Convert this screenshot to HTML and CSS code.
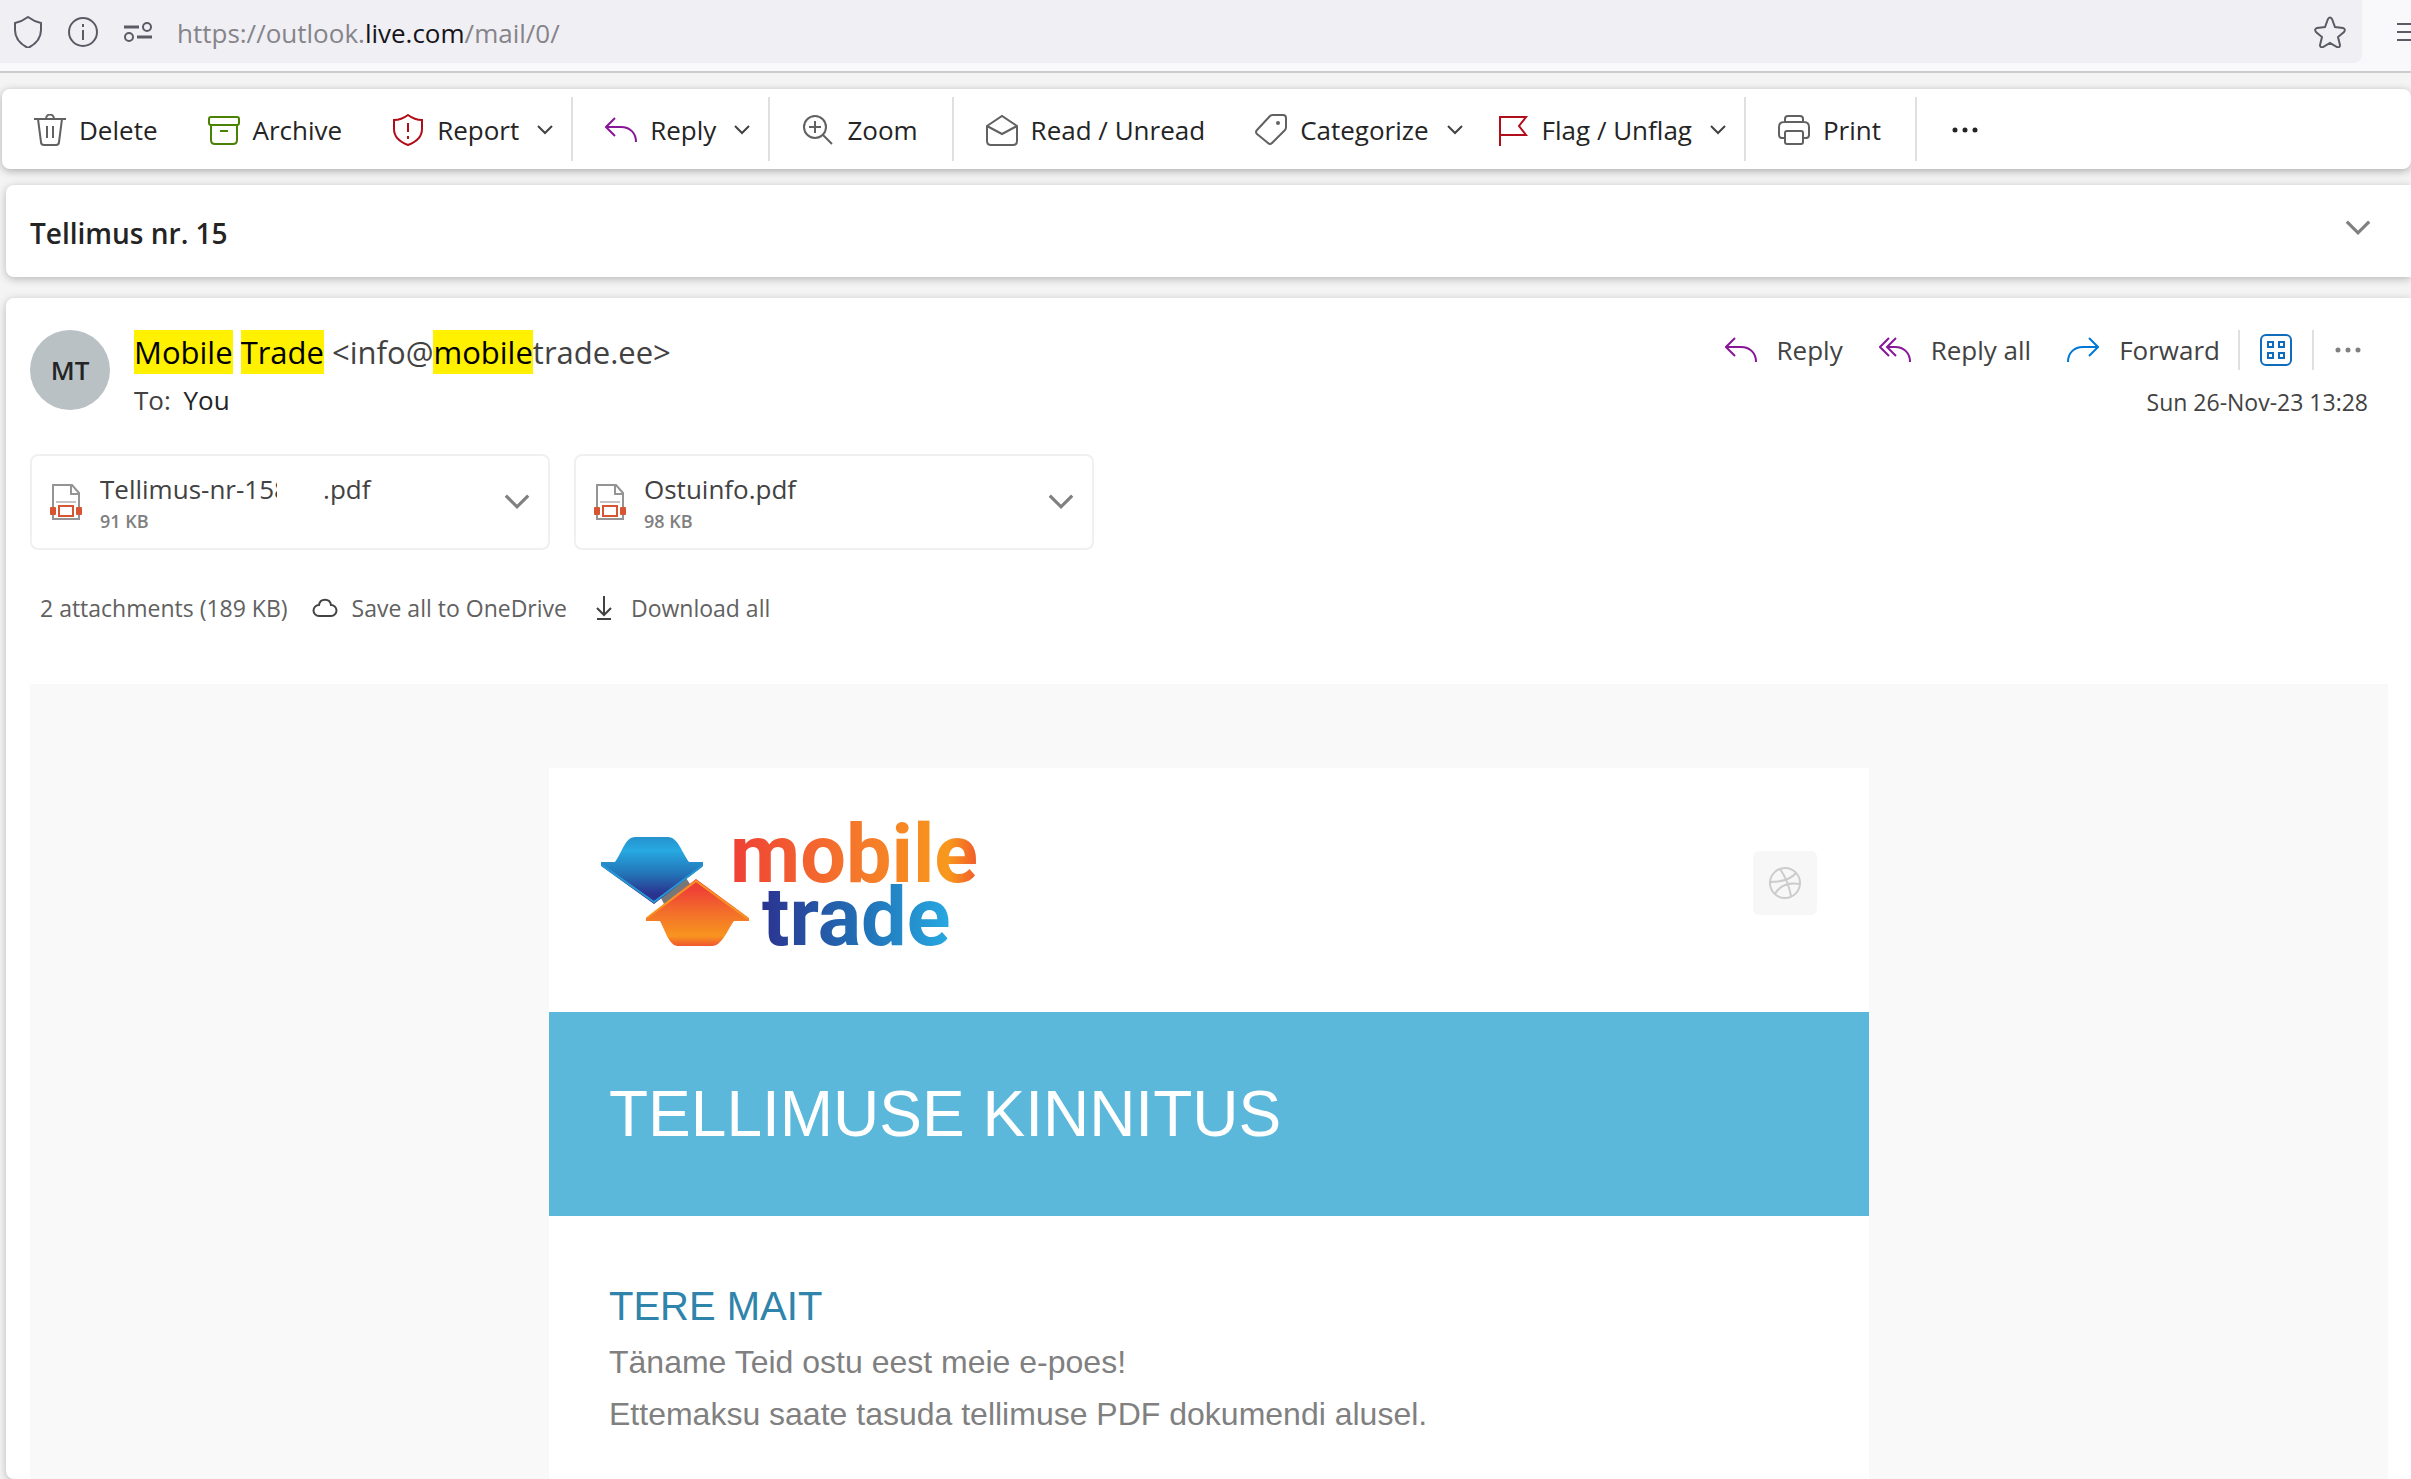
FILE: index.html
```html
<!DOCTYPE html>
<html lang="en">
<head>
  <meta charset="UTF-8" />
  <meta name="viewport" content="width=device-width, initial-scale=1.0"/>
  <title>Tellimus nr. 15 - Outlook</title>
  <link rel="stylesheet" href="styles.css">
</head>
<body>
  <!-- Shared icons -->
  <svg class="sprite" aria-hidden="true">
    <symbol id="chevron" viewBox="0 0 16 10"><path d="M1 1l7 7 7-7"/></symbol>
    <symbol id="dots" viewBox="0 0 32 32"><path d="M6 16h0M16 16h0M26 16h0" stroke-width="5" stroke-linecap="round"/></symbol>
    <symbol id="reply" viewBox="0 0 32 32"><path d="M10 4L1 13l9 9M1 13h15c9 0 15 6 15 15"/></symbol>
    <symbol id="reply-all" viewBox="0 0 32 32"><path d="M10 4L1 13l9 9M17 4l-9 9 9 9M8 13h8c9 0 15 6 15 15"/></symbol>
    <symbol id="forward" viewBox="0 0 32 32"><path d="M22 4l9 9-9 9M31 13H16C7 13 1 19 1 28"/></symbol>
    <symbol id="pdf" viewBox="0 0 32 38">
      <path d="M3 2h19l7 8v26H3zM21 2v9h8" fill="#fff" stroke="#949494"/>
      <path d="M6 19h20" stroke="#c4c4c4"/>
      <path d="M3 22h26v12H3z" fill="#fff" stroke="none"/>
      <path d="M3 22v12M29 22v12" stroke="#949494"/>
      <rect x="0" y="24" width="6" height="8" rx="1" fill="#d65532" stroke="none"/>
      <rect x="26" y="24" width="6" height="8" rx="1" fill="#d65532" stroke="none"/>
      <rect x="9" y="23" width="14" height="10" fill="#fff" stroke="#d65532"/>
    </symbol>
  </svg>

  <div class="browser-bar">
    <div class="url-box">
      <svg class="icon" viewBox="0 0 32 32"><path d="M16 1c4 3 8 5 13 6v7c0 8-5 14-13 18C8 28 3 22 3 14V7c5-1 9-3 13-6z"/></svg>
      <svg class="icon" viewBox="0 0 32 32"><circle cx="16" cy="16" r="14"/><path d="M16 14v10M16 8v3"/></svg>
      <svg class="icon" viewBox="0 0 32 32"><path d="M2 11h15M15 21h15" stroke-width="3"/><circle cx="25" cy="11" r="4"/><circle cx="7" cy="21" r="4"/></svg>
      <div class="url">https://outlook.<span>live.com</span>/mail/0/</div>
      <button class="plain" aria-label="Bookmark this page">
        <svg class="icon" viewBox="0 0 32 32"><path d="M14 3q2-3 4 0l3 8 8 1q3 1 1 4l-6 5 2 8q0 3-3 2l-7-4-7 4q-3 1-3-2l2-8-6-5q-2-3 1-4l8-1z"/></svg>
      </button>
    </div>
    <button class="plain menu" aria-label="Menu"><svg viewBox="0 0 15 20"><path d="M1 2h16M1 10h16M1 18h16"/></svg></button>
  </div>

  <div class="toolbar">
    <div class="group">
      <button class="tool">
        <svg class="icon" viewBox="0 0 32 32"><path d="M0 5h32M12 5c0-6 8-6 8 0M4 5l3 23q0 3 3 3h12q3 0 3-3l3-23M13 12v12M19 12v12"/></svg>Delete
      </button>
      <button class="tool">
        <svg class="icon green" viewBox="0 0 32 32"><rect x="1" y="3" width="30" height="8" rx="2"/><path d="M3 11v15q0 4 4 4h18q4 0 4-4V11M12 17h8"/></svg>Archive
      </button>
      <button class="tool">
        <svg class="icon red" viewBox="0 0 32 32"><path d="M16 1c4 3 8 5 14 5v9c0 8-6 13-14 16C8 28 2 23 2 15V6c6 0 10-2 14-5zM16 9v9M16 22v3"/></svg>Report
        <svg class="chev"><use href="#chevron"/></svg>
      </button>
    </div>
    <div class="group">
      <button class="tool">
        <svg class="icon purple"><use href="#reply"/></svg>Reply
        <svg class="chev"><use href="#chevron"/></svg>
      </button>
    </div>
    <div class="group">
      <button class="tool">
        <svg class="icon" viewBox="0 0 32 32"><circle cx="13" cy="13" r="11"/><path d="M21 21l9 9M7 13h12M13 7v12"/></svg>Zoom
      </button>
    </div>
    <div class="group">
      <button class="tool">
        <svg class="icon" viewBox="0 0 32 32"><path d="M1 12L16 2l15 10v15q0 4-4 4H5q-4 0-4-4zM1 12l15 8 15-8"/></svg>Read / Unread
      </button>
      <button class="tool">
        <svg class="icon" viewBox="0 0 32 32"><path d="M18 1h10q3 0 3 3v9q0 2-1 3L17 29q-2 2-4 0L2 20q-2-2 0-4L15 2q1-1 3-1z"/><circle cx="23" cy="9" r="1"/></svg>Categorize
        <svg class="chev"><use href="#chevron"/></svg>
      </button>
      <button class="tool">
        <svg class="icon red" viewBox="0 0 32 32"><path d="M3 32V3h26l-7 9 7 9H3"/></svg>Flag / Unflag
        <svg class="chev"><use href="#chevron"/></svg>
      </button>
    </div>
    <div class="group">
      <button class="tool">
        <svg class="icon" viewBox="0 0 32 32"><path d="M7 24H4q-3 0-3-3v-8q0-5 5-5h20q5 0 5 5v8q0 3-3 3h-3M7 8V5q0-3 3-3h12q3 0 3 3v3"/><rect x="7" y="17" width="18" height="13" rx="2"/></svg>Print
      </button>
    </div>
    <div class="group">
      <button class="tool" aria-label="More options"><svg class="icon dots"><use href="#dots"/></svg></button>
    </div>
  </div>

  <div class="card subject">
    <h2>Tellimus nr. 15</h2>
    <button class="plain" aria-label="Expand"><svg class="chev big"><use href="#chevron"/></svg></button>
  </div>

  <div class="card message">
    <div class="header">
      <div class="avatar">MT</div>
      <div class="people">
        <div class="from"><mark>Mobile</mark> <mark>Trade</mark> &lt;info@<mark>mobile</mark>trade.ee&gt;</div>
        <div class="to">To: <span>You</span></div>
      </div>
      <div class="side">
        <div class="actions">
          <button class="action"><svg class="icon purple"><use href="#reply"/></svg>Reply</button>
          <button class="action"><svg class="icon purple"><use href="#reply-all"/></svg>Reply all</button>
          <button class="action"><svg class="icon blue"><use href="#forward"/></svg>Forward</button>
          <button class="action apps" aria-label="Apps">
            <svg class="icon" viewBox="0 0 32 32"><rect x="1" y="1" width="30" height="30" rx="5"/><path d="M8 8h5v5H8zM19 8h5v5h-5zM8 19h5v5H8zM19 19h5v5h-5z"/></svg>
          </button>
          <button class="action" aria-label="More actions"><svg class="icon dots"><use href="#dots"/></svg></button>
        </div>
        <div class="date">Sun 26-Nov-23 13:28</div>
      </div>
    </div>

    <div class="files">
      <div class="file">
        <svg class="pdf"><use href="#pdf"/></svg>
        <div class="file-info">
          <div class="file-name">Tellimus-nr-15<span class="hidden-part">8</span>.pdf</div>
          <div class="file-size">91 KB</div>
        </div>
        <button class="plain" aria-label="File actions"><svg class="chev big"><use href="#chevron"/></svg></button>
      </div>
      <div class="file">
        <svg class="pdf"><use href="#pdf"/></svg>
        <div class="file-info">
          <div class="file-name">Ostuinfo.pdf</div>
          <div class="file-size">98 KB</div>
        </div>
        <button class="plain" aria-label="File actions"><svg class="chev big"><use href="#chevron"/></svg></button>
      </div>
    </div>

    <div class="file-actions">
      <span>2 attachments (189 KB)</span>
      <button class="plain">
        <svg class="small-icon" viewBox="0 0 26 26"><path d="M7 21a5 5 0 0 1 0-11c1-7 11-7 12 0a5 5 0 0 1 0 11z"/></svg>Save all to OneDrive
      </button>
      <button class="plain">
        <svg class="small-icon" viewBox="0 0 26 26"><path d="M13 1v18M6 13l7 7 7-7M6 24h14"/></svg>Download all
      </button>
    </div>

    <div class="mail-body">
      <div class="mail">
        <div class="mail-top">
          <svg class="logo" viewBox="0 0 378 126" role="img" aria-label="mobile trade">
            <defs>
              <linearGradient id="blueShape" x2="0" y2="1"><stop stop-color="#2592cd"/><stop offset=".2" stop-color="#27a9e1"/><stop offset=".55" stop-color="#2374b7"/><stop offset=".85" stop-color="#2b3390"/></linearGradient>
              <linearGradient id="orangeShape" x2="0" y2="1"><stop offset=".15" stop-color="#ef4036"/><stop offset=".5" stop-color="#f36f2a"/><stop offset=".85" stop-color="#f8951f"/><stop offset="1" stop-color="#f1562f"/></linearGradient>
              <linearGradient id="mobileText"><stop stop-color="#ef4036"/><stop offset=".5" stop-color="#f5772b"/><stop offset=".88" stop-color="#f8981d"/><stop offset="1" stop-color="#f15a2c"/></linearGradient>
              <linearGradient id="tradeText"><stop stop-color="#2b3390"/><stop offset=".55" stop-color="#2173b8"/><stop offset="1" stop-color="#27a9e1"/></linearGradient>
            </defs>
            <path d="M60 78l25-20 4 6-26 20z" fill="#777"/>
            <path d="M0 42h14c7-9 10-25 20-25h33c10 0 14 16 21 25h14v4L53 84 0 46z" fill="url(#blueShape)"/>
            <path d="M1 45l52 37 48-36" fill="none" stroke="#2797d4" stroke-width="2"/>
            <path d="M95 59l53 39v3h-15c-6 8-12 25-22 25H77c-9 0-13-16-18-25H45v-3z" fill="url(#orangeShape)"/>
            <path d="M46 98l49-37 52 38" fill="none" stroke="#f79320" stroke-width="2"/>
            <text x="129" y="62" fill="url(#mobileText)">mobile</text>
            <text x="161" y="125" fill="url(#tradeText)">trade</text>
          </svg>
          <a class="social" href="#" aria-label="Dribbble">
            <svg viewBox="0 0 32 32"><circle cx="16" cy="16" r="15"/><path d="M11 2c5 7 9 16 11 27M1 15c11 0 20-2 26-9M6 27c5-9 13-12 25-10"/></svg>
          </a>
        </div>
        <div class="banner"><h1>TELLIMUSE KINNITUS</h1></div>
        <div class="mail-text">
          <h3>TERE MAIT</h3>
          <p>Täname Teid ostu eest meie e-poes!</p>
          <p>Ettemaksu saate tasuda tellimuse PDF dokumendi alusel.</p>
        </div>
      </div>
    </div>
  </div>
</body>
</html>
```

FILE: styles.css
```css
:root {
  --page-bg: #f4f4f4;
  --text: #242424;
  --muted: #424242;
  --gray: #616161;
  --line: #e0e0e0;
}

* {
  box-sizing: border-box;
}

body {
  font-family: 'Open Sans', 'Noto Sans', sans-serif;
  font-size: 26px;
  line-height: 36px;
  color: var(--text);
  background: var(--page-bg);
  margin: 0;
  display: flex;
  flex-direction: column;
  min-height: 100vh;
  overflow-x: hidden;
}

h1, h2, h3, p {
  margin: 0;
}

button {
  font: inherit;
  color: inherit;
  background: none;
  border: none;
  padding: 0;
  cursor: pointer;
  display: flex;
  align-items: center;
}

svg {
  fill: none;
  stroke: currentColor;
  stroke-width: 2;
  flex-shrink: 0;
}

.sprite {
  display: none;
}

.icon {
  width: 32px;
  height: 32px;
  color: var(--gray);
}

.green { color: #498205; }
.red { color: #b10e1c; }
.purple { color: #881798; }
.blue { color: #0078d4; }

.chev {
  width: 16px;
  height: 10px;
  color: var(--muted);
}

.chev.big {
  width: 26px;
  height: 16px;
  color: #808080;
}

/* Browser address bar */
.browser-bar {
  display: flex;
  align-items: flex-start;
  height: 73px;
  background: #f9f9fb;
  border-bottom: 2px solid #ccc;
}

.url-box {
  flex: 1;
  display: flex;
  align-items: center;
  gap: 23px;
  height: 63px;
  padding: 0 16px 0 12px;
  background: #f0eff4;
  border-radius: 0 0 8px 0;
}

.url-box .icon {
  color: #5b5b66;
}

.url {
  flex: 1;
  padding-top: 2px;
  color: #85848a;
}

.url span {
  color: #15141a;
}

.menu {
  height: 63px;
  padding-left: 34px;
}

.menu svg {
  width: 15px;
  height: 20px;
  color: #5b5b66;
}

/* Toolbar */
.toolbar {
  display: flex;
  align-items: center;
  height: 80px;
  margin: 16px 0 0 2px;
  background: #fff;
  border-radius: 8px;
  box-shadow: 0 2px 8px rgba(0,0,0,0.3);
}

.group {
  display: flex;
  gap: 6px;
  height: 64px;
  padding: 0 12px 0 10px;
  border-right: 2px solid var(--line);
}

.group:last-child {
  border: none;
}

.tool {
  gap: 13px;
  padding: 2px 22px 0;
}

.tool .chev {
  margin: 0 -16px 0 5px;
}

.tool .dots {
  color: var(--text);
}

/* Cards */
.card {
  margin-left: 6px;
  background: #fff;
  border-radius: 8px 0 0 8px;
  box-shadow: 0 2px 8px rgba(0,0,0,0.25);
}

.subject {
  display: flex;
  align-items: center;
  justify-content: space-between;
  height: 92px;
  margin-top: 16px;
  padding: 0 40px 0 24px;
}

h2 {
  padding-top: 4px;
  font-size: 28px;
  font-weight: 600;
}

.subject button {
  padding-bottom: 6px;
}

.message {
  flex: 1;
  display: flex;
  flex-direction: column;
  margin-top: 21px;
  padding: 32px 23px 0 24px;
}

.header {
  display: flex;
  gap: 24px;
}

.avatar {
  width: 80px;
  height: 80px;
  border-radius: 50%;
  background: #b9c1c4;
  font-weight: 600;
  line-height: 80px;
  text-align: center;
}

.people {
  flex: 1;
}

.from {
  font-size: 31px;
  line-height: 44px;
  color: var(--muted);
}

mark {
  display: inline-block;
  background: #fff100;
  color: #000;
}

.to {
  margin-top: 8px;
  color: var(--muted);
}

.to span {
  margin-left: 6px;
  color: var(--text);
}

.side {
  padding-right: 20px;
}

.actions {
  display: flex;
  justify-content: flex-end;
  gap: 36px;
  height: 40px;
  padding-right: 4px;
}

.action {
  gap: 20px;
  color: var(--muted);
}

.action .dots {
  color: #808080;
}

.apps {
  margin: 0 -18px;
  padding: 0 20px;
  border: solid var(--line);
  border-width: 0 2px;
}

.apps .icon {
  color: #0f6cbd;
}

.date {
  margin-top: 14px;
  font-size: 23px;
  color: var(--muted);
  text-align: right;
}

/* Attachments */
.files {
  display: flex;
  gap: 24px;
  margin-top: 34px;
}

.file {
  display: flex;
  align-items: center;
  width: 520px;
  height: 96px;
  padding: 0 18px;
  border: 2px solid #f0f0f0;
  border-radius: 8px;
}

.pdf {
  width: 32px;
  height: 38px;
}

.file-info {
  flex: 1;
  margin-left: 18px;
  padding-top: 2px;
}

.file-name {
  color: var(--muted);
}

/* Order number is partly blanked out */
.hidden-part {
  display: inline-block;
  width: 3px;
  margin-right: 46px;
  overflow: hidden;
  vertical-align: bottom;
}

.file-size {
  font-size: 18px;
  font-weight: 600;
  line-height: 28px;
  color: #808080;
}

.file-actions {
  display: flex;
  gap: 24px;
  margin-top: 40px;
  padding-left: 10px;
  font-size: 23px;
  color: var(--gray);
}

.file-actions button {
  gap: 14px;
}

.small-icon {
  width: 26px;
  height: 26px;
  color: var(--muted);
}

/* Mail content */
.mail-body {
  flex: 1;
  display: flex;
  justify-content: center;
  margin-top: 58px;
  padding-top: 84px;
  background: #f9f9f9;
  font-family: 'Liberation Sans', Arial, sans-serif;
}

.mail {
  width: 100%;
  max-width: 1320px;
  background: #fff;
}

.mail-top {
  display: flex;
  align-items: center;
  justify-content: space-between;
  padding: 52px 52px 66px;
}

.logo {
  width: 378px;
  height: 126px;
  stroke: none;
  overflow: visible;
}

.logo text {
  font-family: Roboto, sans-serif;
  font-size: 81px;
  font-weight: 700;
}

.social {
  padding: 16px;
  border-radius: 6px;
  background: #f7f7f7;
  color: #ccc;
}

.social svg {
  display: block;
  width: 32px;
  height: 32px;
}

.banner {
  padding: 66px 60px;
  background: #5cb8da;
  color: #fff;
}

h1 {
  font-size: 64px;
  font-weight: 400;
  line-height: 72px;
}

.mail-text {
  padding: 64px 60px 0;
  font-size: 32px;
  line-height: 52px;
  color: #808080;
}

h3 {
  margin-bottom: 4px;
  font-size: 40px;
  font-weight: 400;
  color: #2f84ab;
}
```
